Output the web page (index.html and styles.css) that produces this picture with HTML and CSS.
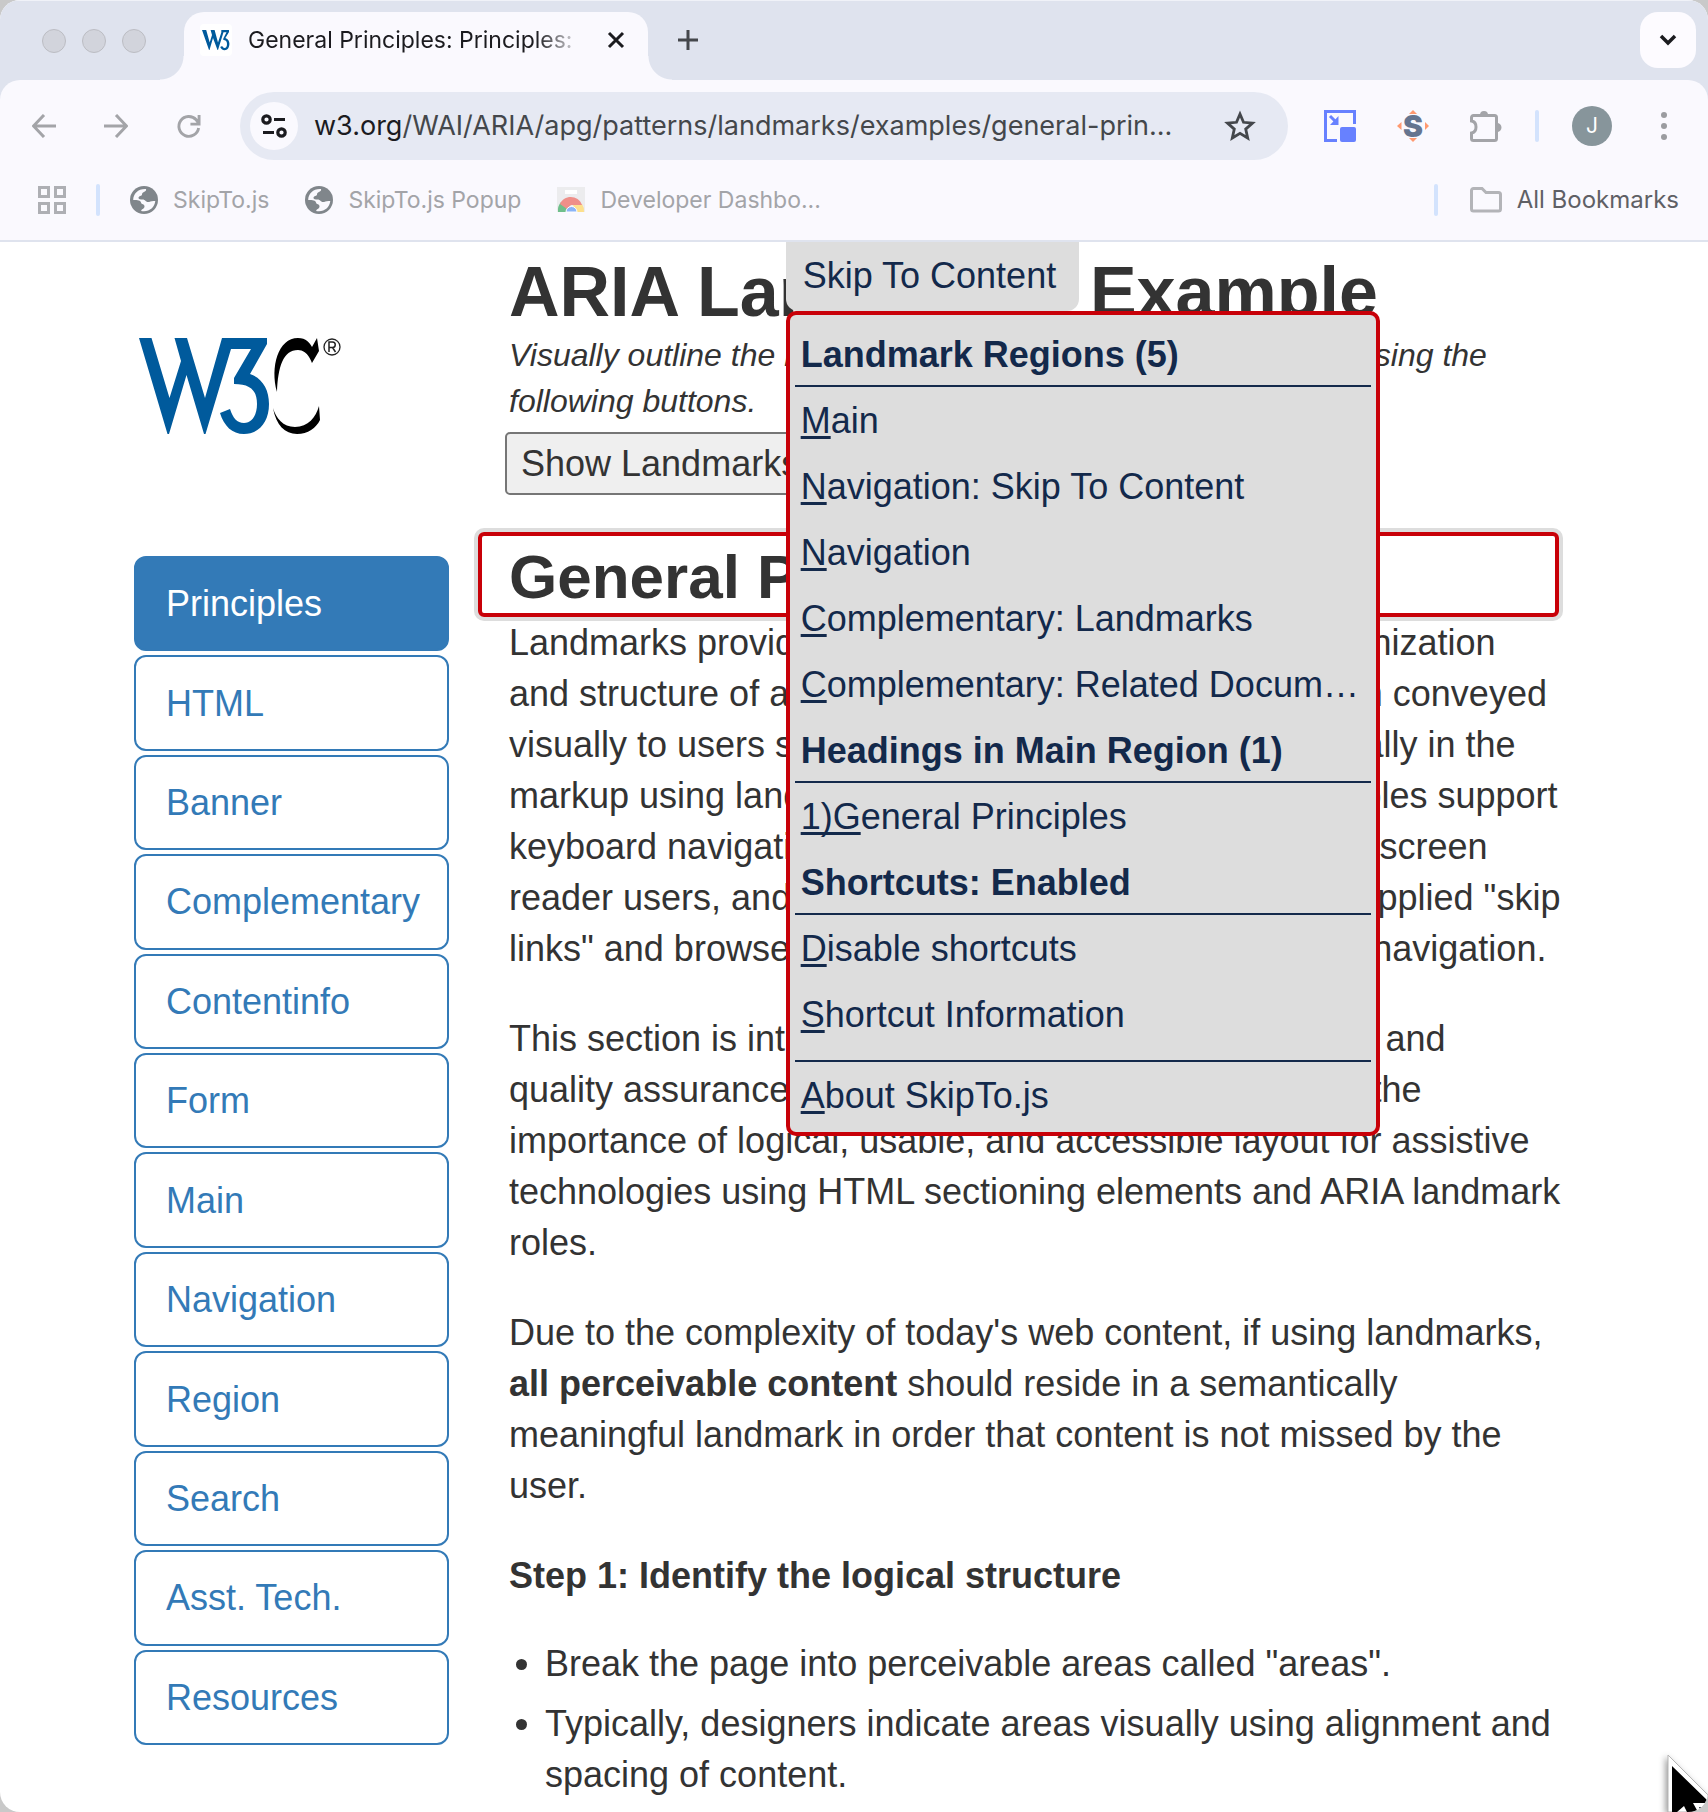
FILE: index.html
```html
<!DOCTYPE html>
<html lang="en">
<head>
<meta charset="utf-8">
<title>General Principles: Principles: ARIA Landmarks Example</title>
<link rel="stylesheet" href="styles.css">
</head>
<body>
<div class="window">
  <header class="chrome">
    <div class="tabstrip">
      <div class="lights"><span></span><span></span><span></span></div>
      <div class="tab">
        <svg class="favicon" viewBox="0 0 32 32" aria-hidden="true"><rect width="32" height="32" fill="#fff"/><path d="M2 6h4.200l3.500 12.500 2.300-7.500L10.600 6h4l3.400 12.500L21.300 8.500V6H29v2l-3.600 6c2.800 1 4 3.400 4 5.800 0 3.800-2 6.400-4.800 6.400-2.200 0-3.600-1.200-4.400-3.200l2-.9c.5 1.200 1.200 1.800 2.300 1.800 1.500 0 2.500-1.500 2.500-4 0-2.700-1.200-3.900-3.700-3.900v-1.500l3.200-6.200h-3L18 26h-.5L13 14 9.500 26H9z" fill="#005a9c"/></svg>
        <span class="tab-title">General Principles: Principles:</span>
        <button class="plain" aria-label="Close tab"><svg width="18" height="18" viewBox="0 0 18 18"><path d="M2 2l14 14M16 2L2 16" stroke="#1b1b1f" stroke-width="3" fill="none"/></svg></button>
      </div>
      <button class="plain newtab" aria-label="New tab"><svg width="22" height="22" viewBox="0 0 22 22"><path d="M11 1v20M1 11h20" stroke="#44474b" stroke-width="3" fill="none"/></svg></button>
      <button class="plain tabsearch" aria-label="Search tabs"><svg width="20" height="12" viewBox="0 0 20 12"><path d="M3 2l7 7 7-7" stroke="#1b1b1f" stroke-width="3.500" fill="none"/></svg></button>
    </div>
    <div class="toolbar">
      <button class="plain" aria-label="Back"><svg width="24" height="24" viewBox="0 0 24 24"><path d="M24 12H2M12 1L1.500 12 12 23" stroke="#a3a4a8" stroke-width="3" fill="none"/></svg></button>
      <button class="plain" aria-label="Forward"><svg width="24" height="24" viewBox="0 0 24 24"><path d="M0 12h22M12 1l10.500 11L12 23" stroke="#a3a4a8" stroke-width="3" fill="none"/></svg></button>
      <button class="plain" aria-label="Reload"><svg width="25" height="25" viewBox="0 0 26 26"><path d="M23.500 14.500A10.300 10.300 0 1 1 21 6l3 4M24 1v9.500h-9" stroke="#a3a4a8" stroke-width="3" fill="none"/></svg></button>
      <div class="omnibox">
        <button class="plain site" aria-label="Site information"><svg width="26" height="24" viewBox="0 0 26 24" fill="none" stroke="#1b1b1f" stroke-width="3.200"><circle cx="5.500" cy="5.500" r="3.700"/><path d="M13 5.500h11M2 18.500h11"/><circle cx="20.500" cy="18.500" r="3.700"/></svg></button>
        <a class="url" href="#general"><b>w3.org</b>/WAI/ARIA/apg/patterns/landmarks/examples/general-prin...</a>
        <button class="plain" aria-label="Bookmark this tab"><svg width="32" height="32" viewBox="0 0 32 32"><path d="M16 4l3.500 8.300 9 .8-6.800 6 2 8.900L16 23.300 8.300 28l2-8.900-6.800-6 9-.8z" stroke="#44474b" stroke-width="2.800" fill="none"/></svg></button>
      </div>
      <div class="tools">
        <button class="plain" aria-label="Picture in picture"><svg width="32" height="32" viewBox="0 0 32 32"><path d="M13 30.500H1.500v-29h29V14" stroke="#6781ff" stroke-width="3" fill="none"/><rect x="16" y="17" width="16" height="15" rx="2" fill="#6781ff"/><path d="M6 6l6 6" stroke="#6781ff" stroke-width="3"/><path d="M14.500 6v9H6z" fill="#6781ff"/></svg></button>
        <button class="plain" aria-label="SkipTo extension"><svg width="32" height="32" viewBox="0 0 32 32"><path d="M16 0l4 4h-8zM16 32l4-4h-8zM0 16l4.500-4v8zM32 16l-4-4v8z" fill="#ff9a70"/><text x="16" y="27" text-anchor="middle" class="s-mark">S</text></svg></button>
        <button class="plain" aria-label="Extensions"><svg width="32" height="34" viewBox="0 0 32 34"><path d="M3.500 6.500h21a2 2 0 0 1 2 2v21a2 2 0 0 1-2 2h-21a2 2 0 0 1-2-2v-5.500c6-1 6-11 0-12V8.500a2 2 0 0 1 2-2z" stroke="#a3a4a8" stroke-width="3" fill="none"/><path d="M10 6a4 4 0 0 1 8 0zM27 14a4.500 4.500 0 0 1 0 9z" fill="#a3a4a8"/></svg></button>
        <span class="rule"></span>
        <button class="plain avatar" aria-label="Profile">J</button>
        <button class="plain more" aria-label="Menu"><svg width="8" height="28" viewBox="0 0 8 28" fill="#9b9ca0"><circle cx="4" cy="3" r="3"/><circle cx="4" cy="14" r="3"/><circle cx="4" cy="25" r="3"/></svg></button>
      </div>
    </div>
    <div class="bookmarks">
      <button class="plain" aria-label="Apps"><svg width="28" height="28" viewBox="0 0 28 28" fill="none" stroke="#aeafb4" stroke-width="3"><path d="M1.500 1.500h9v9h-9zM17.500 1.500h9v9h-9zM1.500 17.500h9v9h-9zM17.500 17.500h9v9h-9z"/></svg></button>
      <span class="rule"></span>
      <a href="#a"><svg width="28" height="28" viewBox="0 0 28 28"><circle cx="14" cy="14" r="14" fill="#80868b"/><path d="M16 3c1 3-4 2.500-4 5.500 0 2-3.500 1-3.500 3.500 0 1.500 2 1.500 4 1.500 3 0 3 2.500 5.500 2.500 2 0 3-1.500 7.300-1-.8 6-5.300 10.300-11.300 10.300-1 0-2-.1-2.800-.4 0-2 3.300-2 3.300-4.500 0-3-3-1.500-3.500-4-.5-2-3-2.500-7.800-2.500C3.200 7.500 8.500 2.500 16 3z" fill="#faf9fe"/></svg>SkipTo.js</a>
      <a href="#b"><svg width="28" height="28" viewBox="0 0 28 28"><circle cx="14" cy="14" r="14" fill="#80868b"/><path d="M16 3c1 3-4 2.500-4 5.500 0 2-3.500 1-3.500 3.500 0 1.500 2 1.500 4 1.500 3 0 3 2.500 5.500 2.500 2 0 3-1.500 7.300-1-.8 6-5.300 10.300-11.300 10.300-1 0-2-.1-2.800-.4 0-2 3.300-2 3.300-4.500 0-3-3-1.500-3.500-4-.5-2-3-2.500-7.800-2.500C3.200 7.500 8.500 2.500 16 3z" fill="#faf9fe"/></svg>SkipTo.js Popup</a>
      <a href="#c"><svg width="28" height="28" viewBox="0 0 28 28"><path d="M0 1h28v25H0z" fill="#ececee"/><path d="M8 4h12v4H8z" fill="#fff"/><path d="M1 26A13 13 0 0 1 4 16l7 6-1 4z" fill="#6fbf8b"/><path d="M27 26a13 13 0 0 0-2-8l-9 1 3 7z" fill="#fde08d"/><path d="M3 18c4-10 19-9 22 1H14l-4 4z" fill="#ef8f89"/><path d="M9 26a5.500 5.500 0 0 1 11 0z" fill="#8ab4f8" stroke="#fff" stroke-width="1"/></svg>Developer Dashbo...</a>
      <span class="rule last"></span>
      <a class="all" href="#d"><svg width="32" height="26" viewBox="0 0 32 26"><path d="M1.500 3.500a2 2 0 0 1 2-2h8.500l4 4h12.500a2 2 0 0 1 2 2v14.500a2 2 0 0 1-2 2h-25a2 2 0 0 1-2-2z" fill="none" stroke="#b3b4b8" stroke-width="3"/></svg>All Bookmarks</a>
    </div>
  </header>

  <div class="page">
    <div class="skipto">
      <button class="skip-button" aria-expanded="true">Skip To Content</button>
      <div class="menu">
        <h3>Landmark Regions (5)</h3>
        <a href="#main"><u>M</u>ain</a>
        <a href="#skip"><u>N</u>avigation: Skip To Content</a>
        <a href="#nav"><u>N</u>avigation</a>
        <a href="#landmarks"><u>C</u>omplementary: Landmarks</a>
        <a href="#related"><u>C</u>omplementary: Related Documents</a>
        <h3>Headings in Main Region (1)</h3>
        <a href="#general"><u>1)G</u>eneral Principles</a>
        <h3>Shortcuts: Enabled</h3>
        <a href="#disable"><u>D</u>isable shortcuts</a>
        <a href="#info"><u>S</u>hortcut Information</a>
        <hr>
        <a href="#about"><u>A</u>bout SkipTo.js</a>
      </div>
    </div>

    <aside class="side">
      <svg class="logo" viewBox="0 0 202 96" role="img" aria-label="W3C"><path d="M0 0h12.500l18 60L42 23 35.500 0H48l18 60L83 0h45v6L111 36c12 4 19 15 19 30 0 18-10 30-25 30-12 0-20-8-24-21l10-4c3 9 7 14 14 14 8 0 13-8 13-19 0-14-7-20-23-20v-6L112 11H92L66.500 96H65L47.500 37 30 96h-1.500z" fill="#005a9c"/><path d="M178 0l2 13-7 12s-4-13-14-13c-15 0-20 17-21 42-7-25 1-54 21-54 8 0 12 5 14 9zM134 70c3 10 10 19 22 19 13 0 21-10 24-21l1 14c-4 8-12 14-23 14-12 0-21-9-24-26z"/><circle cx="193" cy="9" r="8" fill="none" stroke="#222" stroke-width="1.300"/><path d="M190 14V4h3.500a2.700 2.700 0 0 1 0 5.500H190m3.500 0l3 4.500" fill="none" stroke="#222" stroke-width="1.500"/></svg>
      <nav class="pills" aria-label="Landmarks">
        <a class="active" href="#1">Principles</a>
        <a href="#2">HTML</a>
        <a href="#3">Banner</a>
        <a href="#4">Complementary</a>
        <a href="#5">Contentinfo</a>
        <a href="#6">Form</a>
        <a href="#7">Main</a>
        <a href="#8">Navigation</a>
        <a href="#9">Region</a>
        <a href="#10">Search</a>
        <a href="#11">Asst. Tech.</a>
        <a href="#12">Resources</a>
      </nav>
    </aside>

    <main class="content">
      <h1>ARIA Landmarks Example</h1>
      <p class="hint">Visually outline the landmarks and/or headings on the page using the<br>following buttons.</p>
      <button class="show">Show Landmarks</button>
      <h2 id="general">General Principles</h2>
      <p>Landmarks provide a powerful way to identify the organization<br>and structure of a web page. The structural information conveyed<br>visually to users should be represented programmatically in the<br>markup using landmark roles. Such use of landmark roles support<br>keyboard navigation to the structure of a web page for screen<br>reader users, and can be used as targets for author supplied "skip<br>links" and browser extensions for enhanced keyboard navigation.</p>
      <p>This section is intended for web designers, developers and<br>quality assurance specialists who need to understand the<br>importance of logical, usable, and accessible layout for assistive<br>technologies using HTML sectioning elements and ARIA landmark<br>roles.</p>
      <p>Due to the complexity of today's web content, if using landmarks, <strong>all perceivable content</strong> should reside in a semantically meaningful landmark in order that content is not missed by the user.</p>
      <p><strong>Step 1: Identify the logical structure</strong></p>
      <ul>
        <li>Break the page into perceivable areas called "areas".</li>
        <li>Typically, designers indicate areas visually using alignment and spacing of content.</li>
      </ul>
    </main>
  </div>
  <svg class="cursor" width="60" height="72" viewBox="0 0 60 72" aria-hidden="true"><path d="M20 15v57h40V55z" fill="#fff" stroke="#b5b5b5" stroke-width="1"/><path d="M24 26v46h5l7-6 3 6h11l-5-9h15v-2z" fill="#000"/><path d="M51 67h9v5h-7z" fill="#1c2733"/></svg>
</div>
</body>
</html>
```
FILE: styles.css
```css
* { box-sizing: border-box; }

body {
  margin: 0;
  background: #c9c9c9;
  font-family: "Liberation Sans", Arial, sans-serif;
  font-size: 36px;
  line-height: 51px;
  color: #333;
}

a { color: inherit; text-decoration: none; }
svg { display: block; flex: none; }

.window {
  position: relative;
  height: 100vh;
  overflow: hidden;
  border-radius: 20px;
  background: #fff;
  display: flex;
  flex-direction: column;
}

.plain {
  display: flex;
  align-items: center;
  justify-content: center;
  flex: none;
  padding: 0;
  border: 0;
  background: none;
  color: inherit;
  font: inherit;
}

/* Browser chrome */
.chrome {
  flex: none;
  background: #dfe3ee;
  border-bottom: 2px solid #dfe3ee;
  font-family: Inter, "Open Sans", sans-serif;
  line-height: 32px;
}

.tabstrip {
  display: flex;
  align-items: center;
  height: 80px;
  padding: 11px 12px 0 42px;
  border-top: 1px solid #f0f2f8;
}

.lights { display: flex; gap: 16px; margin: 0 38px 11px 0; }
.lights span {
  width: 24px;
  height: 24px;
  border: 1px solid #bcbdc3;
  border-radius: 50%;
  background: #d2d4dc;
}

.tab {
  position: relative;
  align-self: stretch;
  display: flex;
  align-items: center;
  width: 464px;
  padding: 0 23px 12px 16px;
  border-radius: 20px 20px 0 0;
  background: #faf9fe;
}
.tab::before,
.tab::after {
  content: "";
  position: absolute;
  bottom: 0;
  width: 24px;
  height: 24px;
}
.tab::before { right: 100%; background: radial-gradient(circle at 0 0, #dfe3ee 23px, #faf9fe 24px); }
.tab::after { left: 100%; background: radial-gradient(circle at 100% 0, #dfe3ee 23px, #faf9fe 24px); }

.favicon { width: 32px; height: 32px; border-radius: 4px; margin-right: 16px; }
.tab-title {
  flex: 1;
  margin-right: 24px;
  white-space: nowrap;
  font-size: 23px;
  color: #1b1b1f;
  mask-image: linear-gradient(to right, #000 86%, transparent);
}
.newtab { margin: 0 0 12px 29px; }
.tabsearch {
  width: 56px;
  height: 56px;
  margin: 0 0 12px auto;
  border-radius: 18px;
  background: #fdfbff;
}

.toolbar {
  display: flex;
  align-items: center;
  gap: 48px;
  height: 92px;
  padding: 0 40px 0 32px;
  border-radius: 20px 20px 0 0;
  background: #faf9fe;
}
.omnibox {
  flex: 1;
  min-width: 0;
  display: flex;
  align-items: center;
  height: 68px;
  margin-left: -9px;
  padding: 0 32px 0 10px;
  border-radius: 34px;
  background: #e6e9f3;
}
.site { width: 48px; height: 48px; border-radius: 50%; background: #faf9fe; }
.url {
  flex: 1;
  min-width: 0;
  margin-left: 16px;
  overflow: hidden;
  white-space: nowrap;
  font-size: 27px;
  color: #44474b;
}
.url b { font-weight: 400; color: #1b1b1f; }
.tools { display: flex; align-items: center; gap: 41px; margin-left: -12px; }
.rule { width: 4px; height: 32px; border-radius: 2px; background: #d3e3fd; flex: none; }
.tools .rule { margin: 0 -8px; }
.s-mark { font: 900 30px Inter, sans-serif; fill: #66758f; }
.avatar {
  width: 40px;
  height: 40px;
  border-radius: 50%;
  background: #87959b;
  color: #fff;
  font-size: 21px;
}
.more { margin-left: 7px; }

.bookmarks {
  display: flex;
  align-items: center;
  height: 68px;
  padding: 0 29px 12px 38px;
  background: #faf9fe;
  color: #a3a4a8;
  font-size: 23px;
}
.bookmarks a { display: flex; align-items: center; gap: 15px; margin-right: 36px; }
.bookmarks .rule { margin: 0 30px; }
.bookmarks .last { margin: 0 32px 0 auto; }
.bookmarks .all { margin-right: 0; color: #5f6065; font-size: 24px; }

/* Page */
.page {
  position: relative;
  flex: 1;
  min-height: 0;
  display: flex;
  align-items: flex-start;
  gap: 60px;
  padding: 0 128px 0 134px;
}

.side { flex: none; width: 315px; padding-top: 96px; }
.logo { width: 202px; height: 96px; margin-left: 5px; }
.pills {
  display: grid;
  grid-auto-rows: 1fr;
  gap: 4px;
  min-height: 1189px;
  margin-top: 122px;
}
.pills a {
  display: flex;
  align-items: center;
  padding: 0 20px 0 30px;
  border: 2px solid #337ab7;
  border-radius: 12px;
  color: #337ab7;
}
.pills .active { background: #337ab7; color: #fff; }

.content { flex: 1; min-width: 0; }
.content h1 {
  margin: 0;
  padding-top: 10px;
  font-size: 70px;
  line-height: 80px;
}
.content .hint { margin: 0; font-size: 32px; line-height: 46px; font-style: italic; }
.show {
  display: block;
  height: 63px;
  margin: 8px 0 0 -4px;
  padding: 0 14px;
  border: 2px solid #767676;
  border-radius: 5px;
  background: #efefef;
  color: #333;
  font: inherit;
}
.content h2 {
  margin: 37px 21px 0 -31px;
  padding: 4px 27px 0;
  border: 4px solid #c80008;
  border-radius: 6px;
  box-shadow: 0 0 0 4px #ddd;
  font-size: 62px;
  line-height: 73px;
}
.content p { margin: 0 0 39px; }
.content ul { margin: -2px 0 0; padding-left: 36px; }
.content li { margin-bottom: 9px; }

/* Skip menu, drawn over the page */
.skipto {
  position: absolute;
  z-index: 1;
  top: 0;
  left: 46%;
  width: 594px;
  color: #13294b;
}
.skip-button {
  display: block;
  height: 69px;
  padding: 0 23px 2px 17px;
  border: 0;
  border-radius: 0 0 12px 12px;
  background: #ddd;
  color: inherit;
  font: inherit;
}
.menu {
  padding: 6px 5px 4px;
  border: 4px solid #c80008;
  border-radius: 10px;
  background: #ddd;
}
.menu a,
.menu h3 {
  display: block;
  margin: 0;
  padding: 2px 6px 0;
  overflow: hidden;
  white-space: nowrap;
  text-overflow: ellipsis;
  font-size: 36px;
  line-height: 64px;
}
.menu h3 { padding-top: 4px; line-height: 60px; border-bottom: 2px solid #13294b; }
.menu u { text-decoration-thickness: 3px; text-underline-offset: 3px; text-decoration-skip-ink: none; }
.menu hr { margin: 13px 0 0; border: 0; border-top: 2px solid #13294b; }

.cursor { position: absolute; right: 0; bottom: 0; filter: drop-shadow(-2px 2px 3px #0006); }
```
